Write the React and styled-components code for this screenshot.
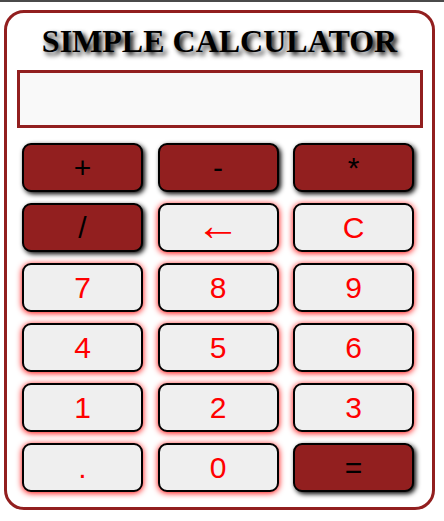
import React from "react";
import styled, { createGlobalStyle } from "styled-components";

const Global = createGlobalStyle`
  html, body { margin: 0; padding: 0; background: #fff; }
  body { border-top: 2px solid #4a4a4a; }
`;

const Calculator = styled.div`
  box-sizing: border-box;
  width: 431px;
  margin: 8px 0 0 4px;
  border: 3px solid #921f1f;
  border-radius: 20px;
  padding: 10px 0 15px;
  display: flex;
  flex-direction: column;
  align-items: flex-start;
`;

const Title = styled.h1`
  align-self: stretch;
  margin: 0;
  text-align: center;
  font-family: "Liberation Serif", "Times New Roman", serif;
  font-weight: bold;
  font-size: 32px;
  line-height: 36px;
  color: #000;
  text-shadow: 3px 3px 5px #000;
`;

const Display = styled.div`
  box-sizing: border-box;
  width: 406px;
  height: 58px;
  margin: 11px 0 0 10px;
  border: 3px solid #921f1f;
  background: #f9f9f9;
`;

const Keys = styled.div`
  display: grid;
  grid-template-columns: 121px 121px 121px;
  grid-auto-rows: 49px;
  column-gap: 14.5px;
  row-gap: 11px;
  margin: 15px 0 0 15px;
`;

const Key = styled.button`
  box-sizing: border-box;
  margin: 0;
  padding: 0;
  border: 2px solid #000;
  border-radius: 9px;
  font-family: "Liberation Sans", Arial, "DejaVu Sans", sans-serif;
  font-size: 30px;
  line-height: 1;
  background: ${(p) => (p.$op ? "#921f1f" : "#efefef")};
  color: ${(p) => (p.$op ? "#000" : "#ff0000")};
  box-shadow: ${(p) => (p.$op ? "2px 2px 5px #000" : "0 1px 6px #ff0000")};
  display: flex;
  align-items: center;
  justify-content: center;
`;

const Arrow = styled.span`
  display: block;
  font-size: 44px;
  line-height: 32px;
  margin-top: -6px;
`;

const keys = [
  ["+", true],
  ["-", true],
  ["*", true],
  ["/", true],
  ["←", false],
  ["C", false],
  ["7", false],
  ["8", false],
  ["9", false],
  ["4", false],
  ["5", false],
  ["6", false],
  ["1", false],
  ["2", false],
  ["3", false],
  [".", false],
  ["0", false],
  ["=", true],
];

export default function App() {
  return (
    <>
      <Global />
      <Calculator>
        <Title>SIMPLE CALCULATOR</Title>
        <Display />
        <Keys>
          {keys.map(([label, op]) => (
            <Key key={label} $op={op}>
              {label === "←" ? <Arrow>{label}</Arrow> : label}
            </Key>
          ))}
        </Keys>
      </Calculator>
    </>
  );
}
